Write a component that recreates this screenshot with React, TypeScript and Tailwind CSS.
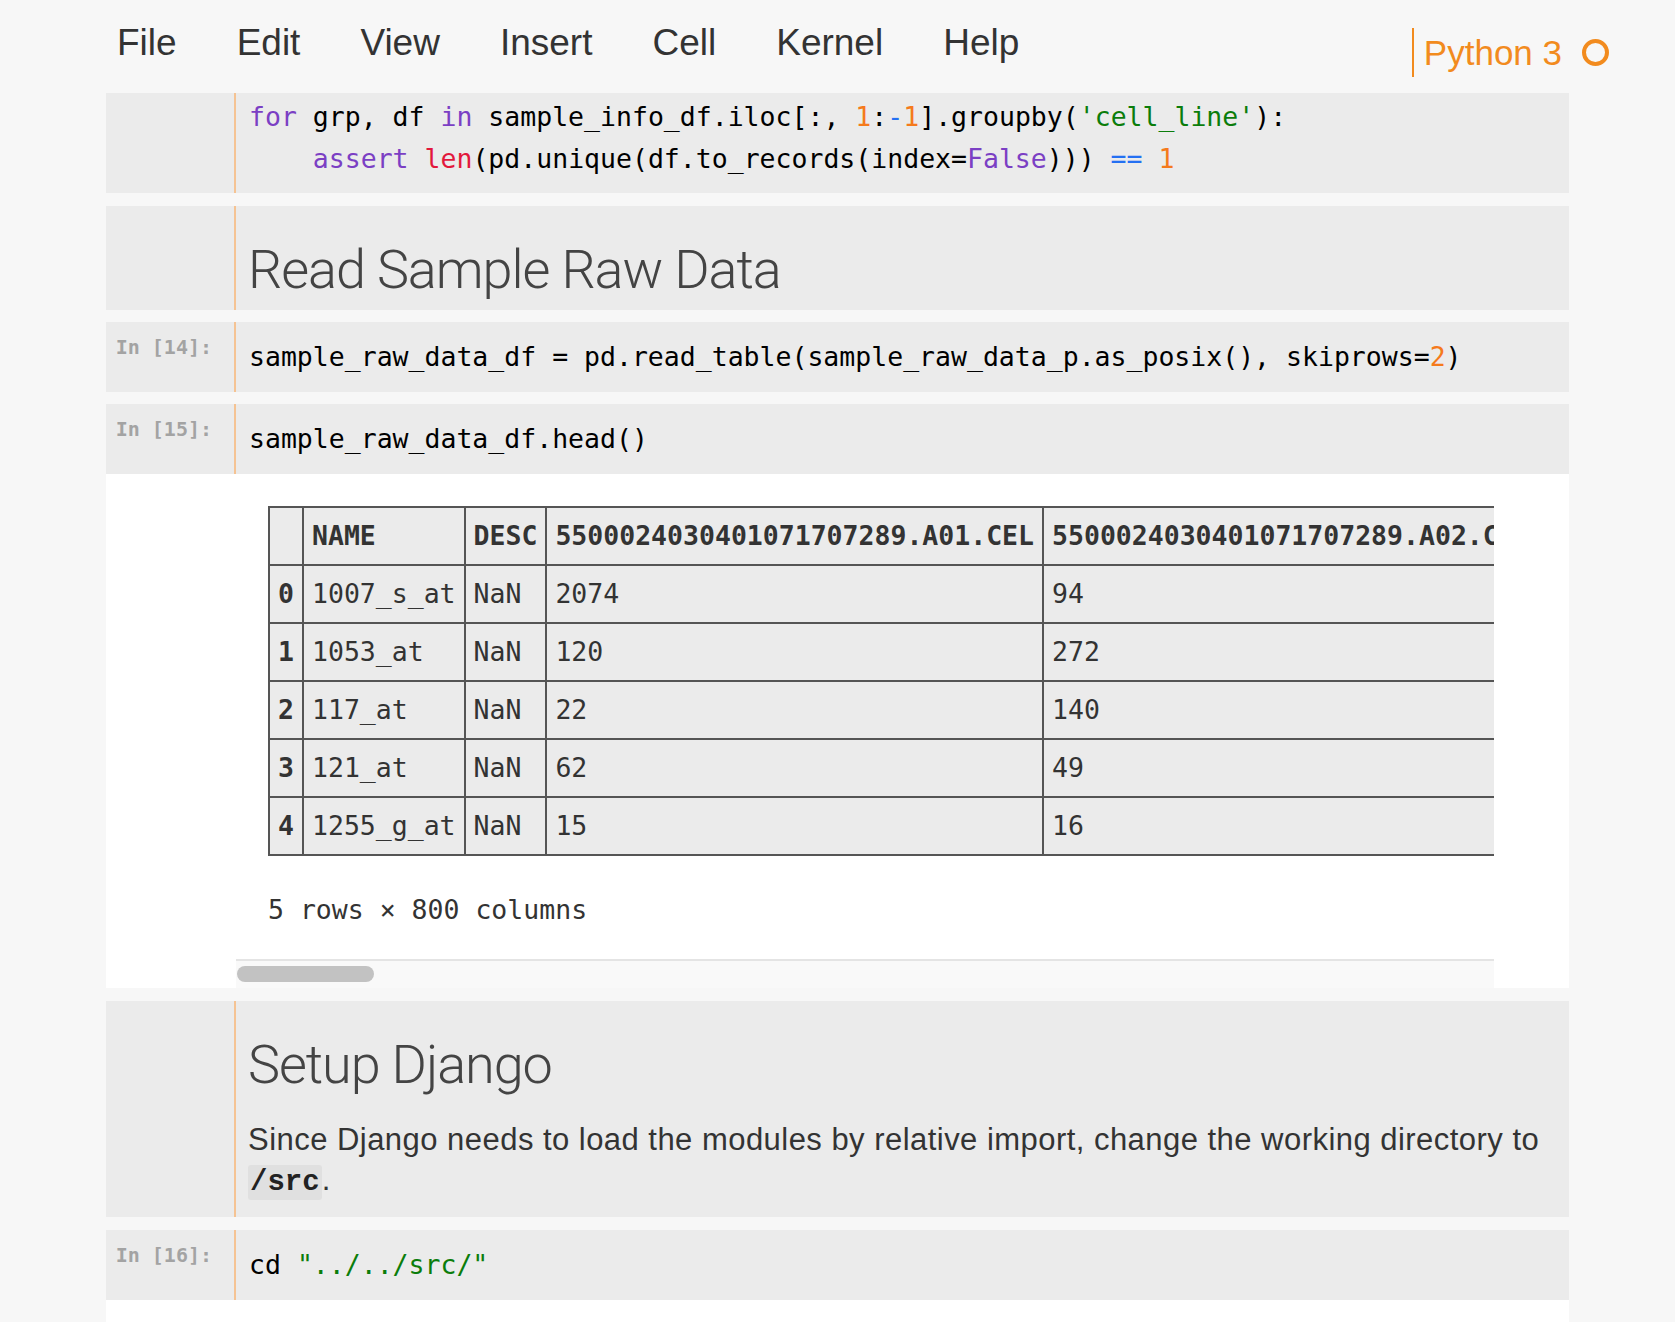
import React from "react";

const mono = "font-['DejaVu_Sans_Mono',monospace]";
const sans = "font-['Liberation_Sans',Arial,sans-serif]";

function Kw({ children }: { children: React.ReactNode }) {
  return <span className="text-[#7b3fc4]">{children}</span>;
}
function Num({ children }: { children: React.ReactNode }) {
  return <span className="text-[#f57a1c]">{children}</span>;
}
function Op({ children }: { children: React.ReactNode }) {
  return <span className="text-[#2470f2]">{children}</span>;
}
function Str({ children }: { children: React.ReactNode }) {
  return <span className="text-[#0b7d0b]">{children}</span>;
}
function Bi({ children }: { children: React.ReactNode }) {
  return <span className="text-[#e2183c]">{children}</span>;
}

function Prompt({ n }: { n?: number }) {
  return (
    <div className={`w-[128px] shrink-0 pr-[22px] pt-[13px] text-right ${mono} text-[20px] font-bold leading-[24px] text-[#a3a3a3]`}>
      {n !== undefined ? `In [${n}]:` : ""}
    </div>
  );
}

function CodeCell({ n, children, extra = "py-[14px]" }: { n?: number; children: React.ReactNode; extra?: string }) {
  return (
    <div className="flex bg-[#ebebeb]">
      <Prompt n={n} />
      <div className={`flex-1 border-l-2 border-[#f5c393] pl-[13px] ${extra} ${mono} text-[26.5px] leading-[42px] text-black whitespace-pre`}>
        {children}
      </div>
    </div>
  );
}

function MarkdownCell({ children, className = "" }: { children: React.ReactNode; className?: string }) {
  return (
    <div className={`flex bg-[#ebebeb] ${className}`}>
      <div className="w-[128px] shrink-0" />
      <div className="flex-1 border-l-2 border-[#f5c393] pl-[12px] pt-[32px]">{children}</div>
    </div>
  );
}

const heading = "font-['Roboto',sans-serif] font-light text-[54px] leading-[64px] tracking-[-0.02em] text-[#444]";

const rows = [
  ["0", "1007_s_at", "NaN", "2074", "94"],
  ["1", "1053_at", "NaN", "120", "272"],
  ["2", "117_at", "NaN", "22", "140"],
  ["3", "121_at", "NaN", "62", "49"],
  ["4", "1255_g_at", "NaN", "15", "16"],
];

const td = "border-2 border-[#555] bg-[#ebebeb] px-[8px] h-[58px] py-0 text-left whitespace-nowrap";

export default function App() {
  return (
    <div className="min-h-[1322px] w-full overflow-hidden bg-[#f7f7f7]">
      {/* menu bar */}
      <div className="flex h-[93px] items-start">
        <ul className={`flex gap-[60px] pl-[117px] pt-[21px] ${sans} text-[37px] leading-[44px] text-[#333]`}>
          {["File", "Edit", "View", "Insert", "Cell", "Kernel", "Help"].map((m) => (
            <li key={m}>{m}</li>
          ))}
        </ul>
        <div className="ml-auto mr-[66px] mt-[28px] flex h-[49px] items-center border-l-2 border-[#f28b1e] pl-[10px]">
          <span className={`${sans} text-[35px] leading-[40px] text-[#f28b1e]`}>Python 3</span>
          <svg width="27" height="27" viewBox="0 0 27 27" className="ml-[20px]">
            <circle cx="13.5" cy="13.5" r="11.5" fill="none" stroke="#f28b1e" strokeWidth="4" />
          </svg>
        </div>
      </div>

      <div className="ml-[106px] flex w-[1463px] flex-col">
        <CodeCell extra="pt-[3px] pb-[13px]">
          <div>
            <Kw>for</Kw> grp, df <Kw>in</Kw> sample_info_df.iloc[:, <Num>1</Num>:<Op>-</Op><Num>1</Num>].groupby(<Str>'cell_line'</Str>):
          </div>
          <div>
            {"    "}<Kw>assert</Kw> <Bi>len</Bi>(pd.unique(df.to_records(index=<Kw>False</Kw>))) <Op>==</Op> <Num>1</Num>
          </div>
        </CodeCell>

        <MarkdownCell className="mt-[13px] h-[104px]">
          <h1 className={heading}>Read Sample Raw Data</h1>
        </MarkdownCell>

        <div className="mt-[12px]">
          <CodeCell n={14}>
            sample_raw_data_df = pd.read_table(sample_raw_data_p.as_posix(), skiprows=<Num>2</Num>)
          </CodeCell>
        </div>

        <div className="mt-[12px]">
          <CodeCell n={15}>sample_raw_data_df.head()</CodeCell>
          {/* output */}
          <div className="flex bg-white">
            <div className="w-[130px] shrink-0" />
            <div className="w-[1258px] overflow-hidden pt-[32px]">
              <table className={`ml-[32px] w-max border-collapse ${mono} text-[26.5px] leading-[32px] text-[#333]`}>
                <thead>
                  <tr>
                    <th className={td}></th>
                    <th className={`${td} font-bold`}>NAME</th>
                    <th className={`${td} font-bold`}>DESC</th>
                    <th className={`${td} font-bold`}>5500024030401071707289.A01.CEL</th>
                    <th className={`${td} font-bold`}>5500024030401071707289.A02.CEL</th>
                  </tr>
                </thead>
                <tbody>
                  {rows.map((r) => (
                    <tr key={r[0]}>
                      <td className={`${td} font-bold`}>{r[0]}</td>
                      <td className={td}>{r[1]}</td>
                      <td className={td}>{r[2]}</td>
                      <td className={td}>{r[3]}</td>
                      <td className={td}>{r[4]}</td>
                    </tr>
                  ))}
                </tbody>
              </table>
              <p className={`ml-[32px] mt-[33px] ${mono} text-[26.5px] leading-[42px] text-[#333]`}>5 rows × 800 columns</p>
              <div className="mt-[28px] h-[29px] border-t-2 border-[#e4e4e4] bg-[#f9f9f9] pt-[5px]">
                <div className="ml-[1px] h-[16px] w-[137px] rounded-full bg-[#c2c2c2]" />
              </div>
            </div>
          </div>
        </div>

        <MarkdownCell className="mt-[13px] h-[216px]">
          <h1 className={heading}>Setup Django</h1>
          <p className={`mt-[23px] ${sans} text-[31px] leading-[40px] tracking-[0.015em] text-[#333]`}>
            <span className="whitespace-nowrap">
              Since Django needs to load the modules by relative import, change the working directory to
            </span>
            <br />
            <code className="rounded-[3px] bg-[#e0e0e0] px-[2px] py-[1px] font-['Liberation_Mono',monospace] text-[29px] font-semibold tracking-normal text-[#222]">
              /src
            </code>
            .
          </p>
        </MarkdownCell>

        <div className="mt-[13px]">
          <CodeCell n={16}>
            cd <Str>"../../src/"</Str>
          </CodeCell>
          <div className="h-[40px] bg-white" />
        </div>
      </div>
    </div>
  );
}
